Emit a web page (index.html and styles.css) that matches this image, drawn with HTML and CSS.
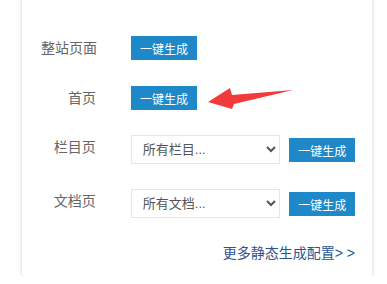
FILE: index.html
```html
<!DOCTYPE html>
<html lang="zh-CN">
<head>
    <meta charset="UTF-8">
    <title>静态生成</title>
    <link rel="stylesheet" href="styles.css">
</head>
<body>
    <div class="card">
        <div class="row">
            <span class="label">整站页面</span>
            <button class="btn">一键生成</button>
        </div>

        <div class="row">
            <span class="label">首页</span>
            <button class="btn">一键生成</button>
            <svg class="arrow" width="90" height="26" viewBox="0 0 90 26">
                <polygon points="0,14 22,0 24,7 85,2 26,16 24,21" fill="#f23a3a"/>
            </svg>
        </div>

        <div class="row">
            <span class="label">栏目页</span>
            <select class="picker">
                <option>所有栏目...</option>
            </select>
            <button class="btn btn-side">一键生成</button>
        </div>

        <div class="row">
            <span class="label">文档页</span>
            <select class="picker">
                <option>所有文档...</option>
            </select>
            <button class="btn btn-side">一键生成</button>
        </div>

        <div class="more">
            <a href="#">更多静态生成配置&gt; &gt;</a>
        </div>
    </div>
</body>
</html>
```

FILE: styles.css
```css
* {
    margin: 0;
    padding: 0;
    box-sizing: border-box;
}

body {
    font-family: 'Liberation Sans', 'Noto Sans CJK SC', sans-serif;
    background: #fff;
    padding: 0 15px 0 22px;
}

.card {
    width: 350px;
    margin-top: -20px;
    padding: 56px 17px 13px 19px;
    background: #fff;
    border-radius: 3px;
    box-shadow: 0 1px 4px rgba(0,0,0,0.18);
}

.row {
    position: relative;
    display: flex;
    align-items: flex-start;
    margin-bottom: 25px;
}

.row:first-child {
    margin-bottom: 26px;
}

.label {
    width: 55px;
    margin-right: 35px;
    text-align: right;
    font-size: 14px;
    line-height: 24px;
    color: #666;
    white-space: nowrap;
}

.btn {
    width: 66px;
    height: 24px;
    background: #1e88c8;
    color: #fff;
    border: none;
    font-family: inherit;
    font-size: 12px;
    cursor: pointer;
}

.btn-side {
    margin-top: 3px;
    margin-left: 9px;
}

.picker {
    width: 150px;
    height: 29px;
    padding-left: 7px;
    border: 1px solid #e6e6e6;
    background: #fff;
    color: #555;
    font-family: inherit;
    font-size: 13px;
    outline: none;
}

.arrow {
    position: absolute;
    left: 167px;
    top: 2px;
}

.more {
    margin-top: 2px;
    text-align: right;
    font-size: 14px;
    line-height: 20px;
}

.more a {
    color: #2d5491;
    text-decoration: none;
}
```
